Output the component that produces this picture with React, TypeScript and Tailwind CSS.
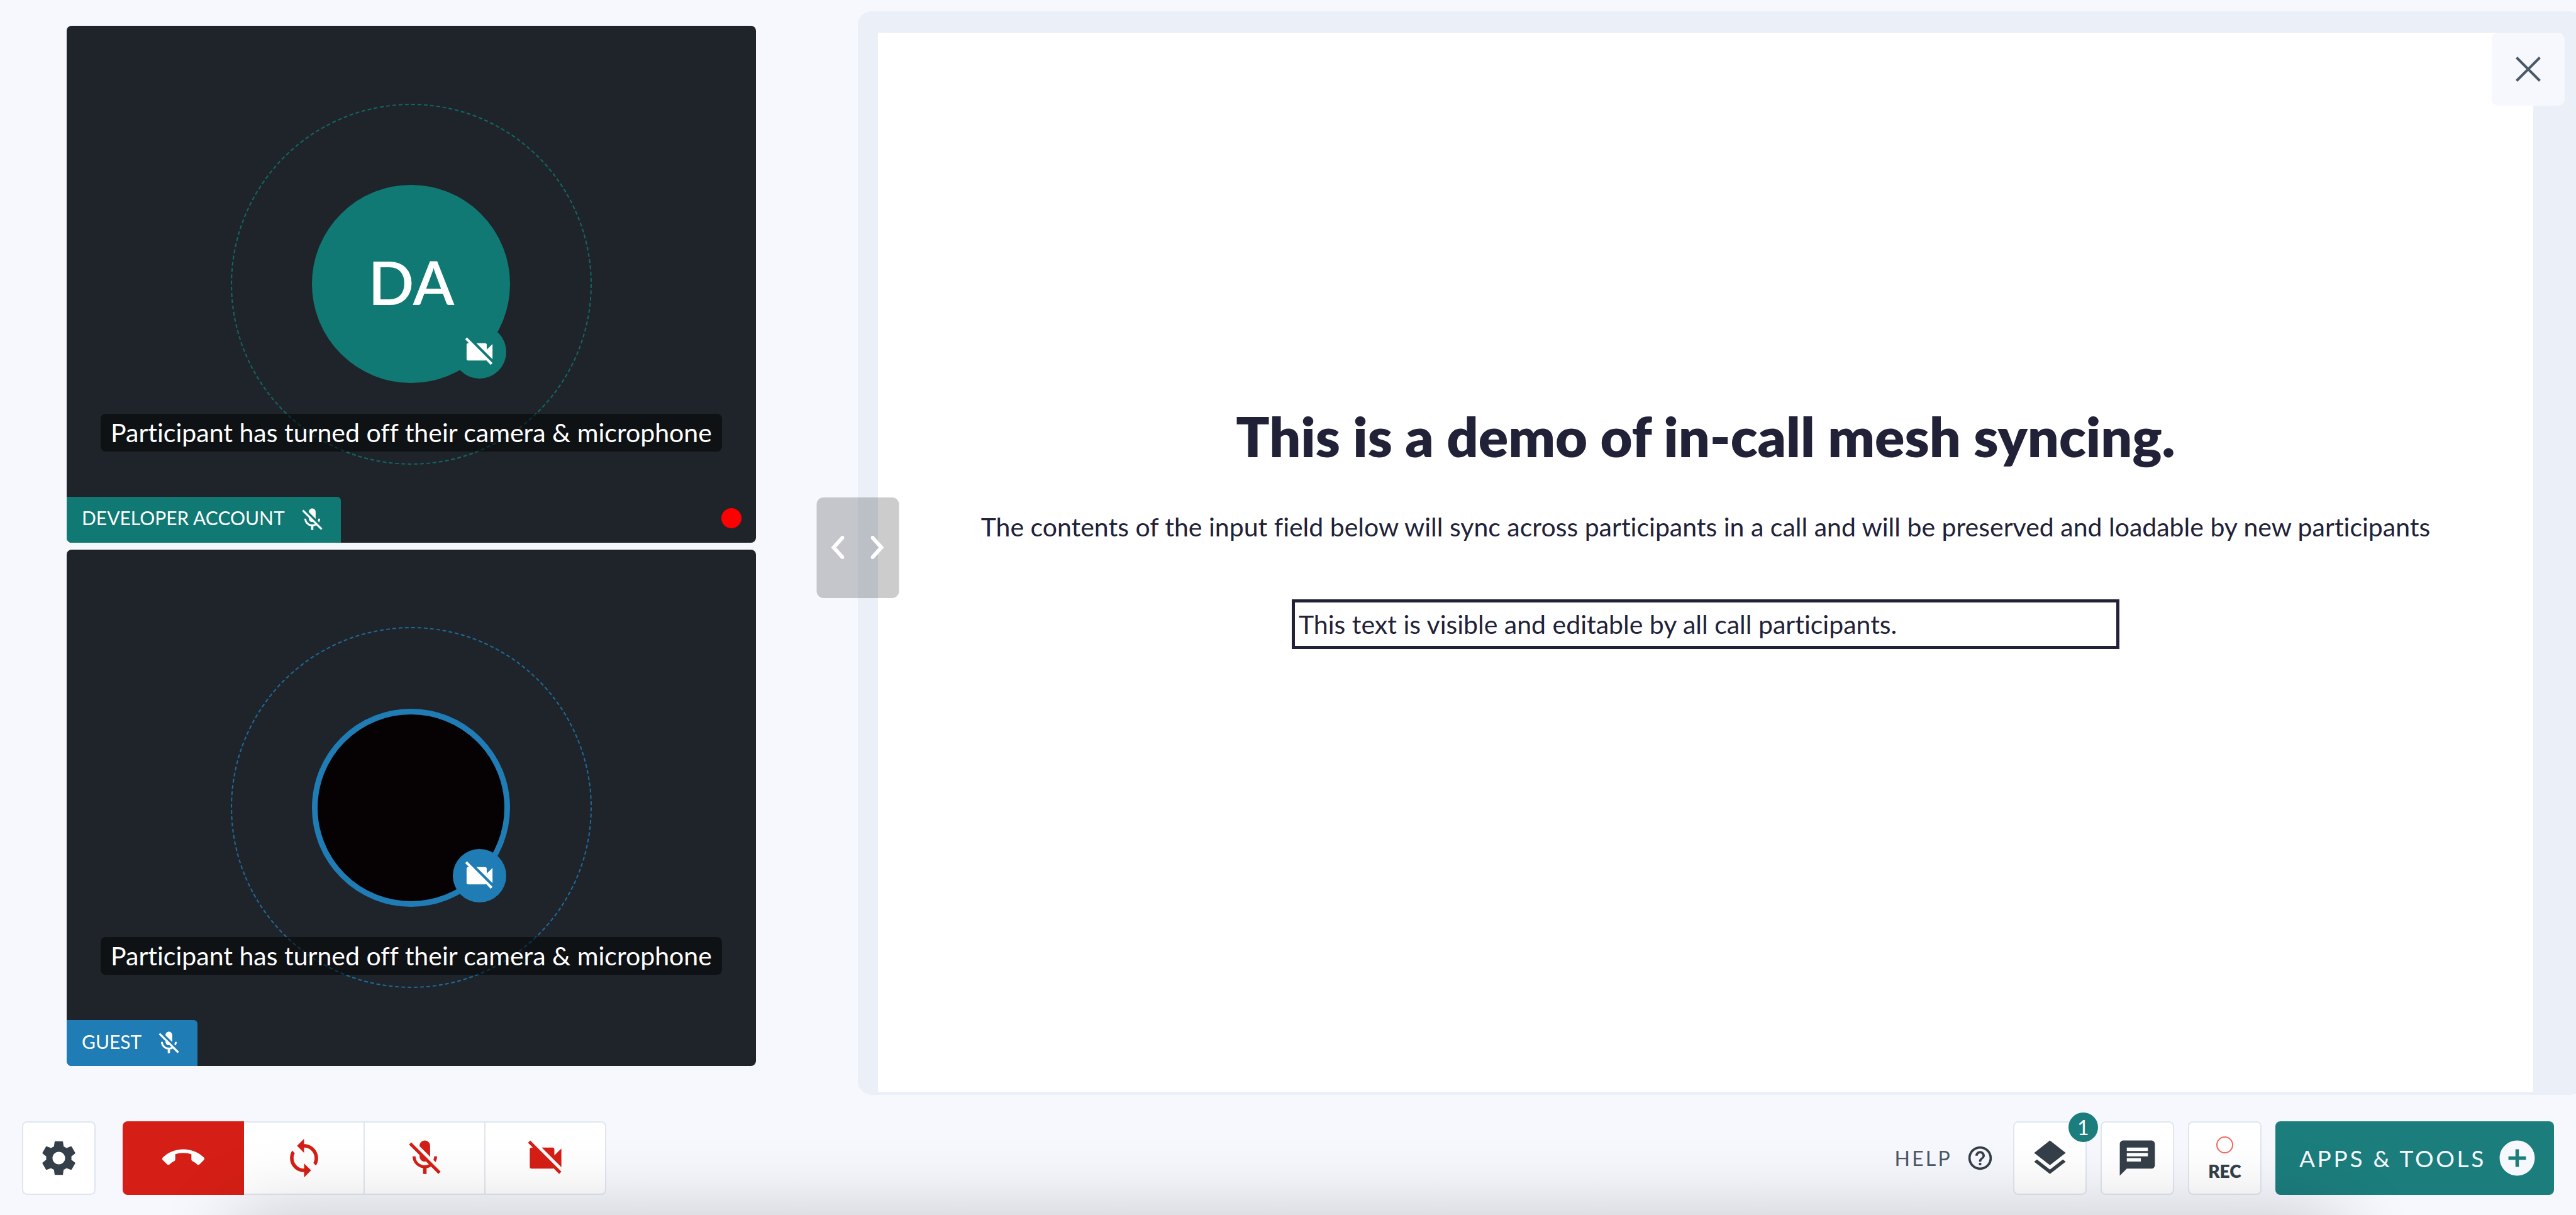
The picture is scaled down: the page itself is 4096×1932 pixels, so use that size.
import { useState } from "react";
import type { ReactNode } from "react";
import {
  MdAddCircle,
  MdCallEnd,
  MdChat,
  MdHelpOutline,
  MdLayers,
  MdMicOff,
  MdSettings,
  MdSync,
  MdVideocamOff,
} from "react-icons/md";

type Tone = "teal" | "blue";

const tones: Record<Tone, { fill: string; ring: string; border: string }> = {
  teal: { fill: "bg-[#107974]", ring: "border-[#107974]/80", border: "border-[#107974] bg-[#107974]" },
  blue: { fill: "bg-[#1f7cb4]", ring: "border-[#1f7cb4]/80", border: "border-[#1f7cb4] bg-[#060102]" },
};

function ParticipantTile({
  name,
  tone,
  initials,
  recording = false,
}: {
  name: string;
  tone: Tone;
  initials?: string;
  recording?: boolean;
}) {
  const t = tones[tone];
  return (
    <article className="relative flex min-h-0 flex-1 items-center justify-center overflow-hidden rounded-[8px] bg-[#1f242b]">
      <div className={`flex size-[574px] items-center justify-center rounded-full border-2 border-dashed ${t.ring}`}>
        <div className={`relative flex size-[315px] items-center justify-center rounded-full border-[9px] ${t.border}`}>
          {initials && <span className="pb-2 text-[96px] leading-none font-semibold text-white">{initials}</span>}
          <span
            className={`absolute -right-[3px] -bottom-[2px] flex size-[85px] items-center justify-center rounded-full text-white ${t.fill}`}
          >
            <MdVideocamOff className="size-[55px]" />
          </span>
        </div>
      </div>

      <p className="absolute bottom-[145px] rounded-[8px] bg-black/50 px-4 text-[41px] leading-[60px] whitespace-nowrap text-white">
        Participant has turned off their camera &amp; microphone
      </p>

      <div
        className={`absolute bottom-0 left-0 flex h-[73px] items-center gap-[22px] rounded-tr-[6px] pr-6 pl-6 text-white ${t.fill}`}
      >
        <span className="pb-[6px] text-[30px] leading-none">{name}</span>
        <MdMicOff className="size-[43px]" />
      </div>

      {recording && <span className="absolute right-[23px] bottom-[23px] size-8 rounded-full bg-[#ff0000]" />}
    </article>
  );
}

function SquareButton({ label, children }: { label: string; children: ReactNode }) {
  return (
    <button
      type="button"
      aria-label={label}
      className="relative flex size-[117px] flex-col items-center justify-center rounded-[8px] border-2 border-[#dfe6f0] bg-white text-[#353f49]"
    >
      {children}
    </button>
  );
}

function CallButton({ label, children }: { label: string; children: ReactNode }) {
  return (
    <button
      type="button"
      aria-label={label}
      className="flex w-48 items-center justify-center border-y-2 border-r-2 border-[#dfe6f0] bg-white text-[#d51f16] last:rounded-r-[8px]"
    >
      {children}
    </button>
  );
}

export default function App() {
  const [text, setText] = useState("This text is visible and editable by all call participants.");

  return (
    <div className="relative flex h-screen flex-col overflow-hidden bg-[#f7f8fe] font-['Lato','Open_Sans',sans-serif] [font-variant-ligatures:no-common-ligatures]">
      <main className="flex min-h-0 flex-1">
        <section
          aria-label="Participants"
          className="flex w-[33.3%] shrink-0 flex-col gap-[11px] pt-[41px] pr-[162px] pb-[46px] pl-[106px]"
        >
          <ParticipantTile name="DEVELOPER ACCOUNT" tone="teal" initials="DA" recording />
          <ParticipantTile name="GUEST" tone="blue" />
        </section>

        <section aria-label="Shared app" className="relative flex min-w-0 flex-1 pt-[18px]">
          <div className="relative -mr-3 flex flex-1 rounded-[22px] bg-[#eaeff8] pt-[34px] pr-20 pb-[5px] pl-8">
            <div className="flex flex-1 flex-col items-center justify-center bg-white pb-[116px] text-[#212237]">
              <h1 className="text-[88px] leading-[106px] font-extrabold">This is a demo of in-call mesh syncing.</h1>
              <p className="mt-[67px] text-[41px] leading-[50px]">
                The contents of the input field below will sync across participants in a call and will be preserved and
                loadable by new participants
              </p>
              <input
                aria-label="Shared text"
                value={text}
                onChange={(e) => setText(e.target.value)}
                className="mt-[90px] h-[79px] w-1/2 border-5 border-[#212237] bg-white pl-[6px] text-[41px] outline-none"
              />
            </div>
            <button
              type="button"
              aria-label="Close"
              className="absolute top-[34px] right-[30px] flex size-[116px] items-center justify-center rounded-[10px] bg-[#f7f8fe] text-[#4b5866]"
            >
              <svg viewBox="0 0 40 40" className="size-10" fill="none" stroke="currentColor" strokeWidth="4">
                <path d="M1.5 1.5 38.5 38.5M38.5 1.5 1.5 38.5" />
              </svg>
            </button>
          </div>

          <button
            type="button"
            aria-label="Resize panels"
            className="absolute top-1/2 left-0 flex h-40 w-[131px] -translate-x-1/2 -translate-y-1/2 items-center justify-center gap-[42px] rounded-[11px] bg-black/20 text-white"
          >
            <svg viewBox="0 0 21 37" className="h-[37px] w-[21px]" fill="none" stroke="currentColor" strokeWidth="6" strokeLinecap="round">
              <path d="M18 3 4 18.500 18 34" />
            </svg>
            <svg viewBox="0 0 21 37" className="h-[37px] w-[21px]" fill="none" stroke="currentColor" strokeWidth="6" strokeLinecap="round">
              <path d="M3 3 17 18.500 3 34" />
            </svg>
          </button>
        </section>
      </main>

      <footer className="flex items-center justify-between px-[35px] pt-[42px] pb-8">
        <div className="flex gap-[43px]">
          <SquareButton label="Settings">
            <MdSettings className="size-[67px]" />
          </SquareButton>
          <div className="flex">
            <button
              type="button"
              aria-label="Leave call"
              className="flex w-[193px] items-center justify-center rounded-l-[8px] bg-[#d51f16] text-white"
            >
              <MdCallEnd className="size-[67px]" />
            </button>
            <CallButton label="Switch camera">
              <MdSync className="size-[67px]" />
            </CallButton>
            <CallButton label="Unmute microphone">
              <MdMicOff className="size-[67px]" />
            </CallButton>
            <CallButton label="Turn on camera">
              <MdVideocamOff className="size-[67px]" />
            </CallButton>
          </div>
        </div>

        <div className="flex items-center gap-[22px]">
          <a href="#help" className="mr-2 flex items-center gap-[22px] text-[32px] leading-none tracking-widest text-[#353f49]">
            <span className="text-[#4b5866]">HELP</span>
            <MdHelpOutline className="size-[45px]" />
          </a>
          <SquareButton label="Layers">
            <MdLayers className="size-[67px]" />
            <span className="absolute -top-4 left-[86px] flex size-[47px] items-center justify-center rounded-full bg-[#1c7d7d] text-[32px] leading-none text-white">
              1
            </span>
          </SquareButton>
          <SquareButton label="Chat">
            <MdChat className="size-[67px]" />
          </SquareButton>
          <SquareButton label="Record">
            <span className="size-[27px] rounded-full border-2 border-[#f5675f]" />
            <span className="mt-[14px] text-[28px] leading-none font-extrabold">REC</span>
          </SquareButton>
          <button
            type="button"
            className="flex h-[117px] items-center gap-4 rounded-[8px] bg-[#1c7d7d] pr-[25px] pl-[38px] text-[37px] leading-none tracking-widest text-[#f7f8fe]"
          >
            APPS &amp; TOOLS
            <MdAddCircle className="size-[67px]" />
          </button>
        </div>
      </footer>

      <div
        aria-hidden="true"
        className="pointer-events-none absolute inset-x-[375px] top-full h-40 shadow-[0_0_125px_0_rgba(0,0,0,0.2)]"
      />
    </div>
  );
}
